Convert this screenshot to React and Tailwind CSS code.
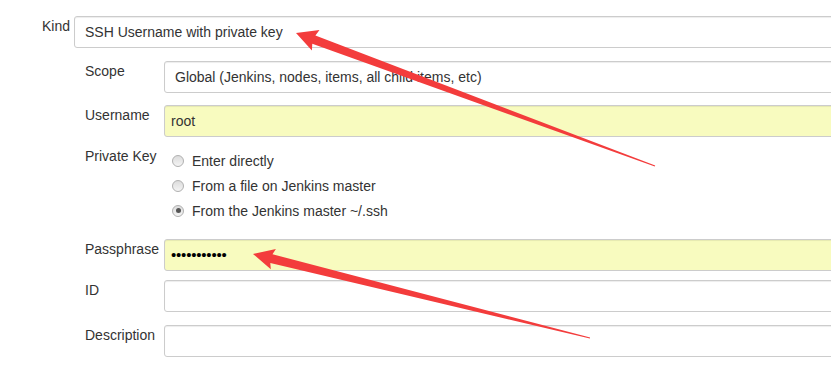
function arrowPoints([tx, ty], [sx, sy], headLen, headHalf, shaftHalf, tailHalf) {
  const dx = sx - tx
  const dy = sy - ty
  const len = Math.hypot(dx, dy)
  const ux = dx / len
  const uy = dy / len
  const px = -uy
  const py = ux
  const bx = tx + ux * headLen
  const by = ty + uy * headLen
  const pts = [
    [tx, ty],
    [bx + px * headHalf, by + py * headHalf],
    [bx + ux * -2 + px * shaftHalf, by + uy * -2 + py * shaftHalf],
    [sx + px * tailHalf, sy + py * tailHalf],
    [sx - px * tailHalf, sy - py * tailHalf],
    [bx + ux * -2 - px * shaftHalf, by + uy * -2 - py * shaftHalf],
    [bx - px * headHalf, by - py * headHalf],
  ]
  return pts.map(([x, y]) => `${x.toFixed(1)},${y.toFixed(1)}`).join(' ')
}

function Field({ children, yellow }) {
  return (
    <div
      className={`h-8 w-[1000px] shrink-0 rounded-[3px] border border-[#cccccc] px-[10px] flex items-center leading-5 shadow-[inset_0_1px_1px_rgba(0,0,0,0.075)] ${
        yellow ? 'bg-[#f8fbbf]' : 'bg-white'
      }`}
    >
      {children}
    </div>
  )
}

function Row({ label, children, className = '' }) {
  return (
    <div className={`flex ${className}`}>
      <div className="w-[79px] shrink-0 leading-5">{label}</div>
      {children}
    </div>
  )
}

function Radio({ checked, label }) {
  return (
    <div className="h-[25px] flex items-center gap-2">
      <span className="w-3 h-3 rounded-full border border-[#b0b0b0] bg-gradient-to-b from-[#dcdcdc] to-[#f4f4f4] flex items-center justify-center">
        {checked && <span className="w-[5px] h-[5px] rounded-full bg-[#555]" />}
      </span>
      <span className="leading-5">{label}</span>
    </div>
  )
}

export default function App() {
  return (
    <div
      className="relative w-[831px] h-[380px] overflow-hidden bg-white text-[14px] text-[#333]"
      style={{ fontFamily: '"Liberation Sans", Arial, sans-serif' }}
    >
      <div className="pt-4 pl-[42px] flex">
        <div className="w-[32px] shrink-0 leading-5">Kind</div>
        <Field>SSH Username with private key</Field>
      </div>

      <div className="pl-[85px]">
        <Row label="Scope" className="mt-[13px]">
          <Field>Global (Jenkins, nodes, items, all child items, etc)</Field>
        </Row>
        <Row label="Username" className="mt-3">
          <Field yellow>
            <span className="-ml-[4px]">root</span>
          </Field>
        </Row>
        <Row label="Private Key" className="mt-[9px]">
          <div className="pl-2 pt-[2px]">
            <Radio label="Enter directly" />
            <Radio label="From a file on Jenkins master" />
            <Radio checked label="From the Jenkins master ~/.ssh" />
          </div>
        </Row>
        <Row label="Passphrase" className="mt-4">
          <Field yellow>
            <span className="-ml-[4px] text-black text-[15px] tracking-[-0.2px]">•••••••••••</span>
          </Field>
        </Row>
        <Row label="ID" className="mt-[9px]">
          <Field />
        </Row>
        <Row label="Description" className="mt-[13px]">
          <Field />
        </Row>
      </div>

      <svg className="absolute inset-0 pointer-events-none" width="831" height="380">
        <polygon points={arrowPoints([296, 33], [655, 166], 21, 11, 4.5, 0.5)} fill="#f33c3c" />
        <polygon points={arrowPoints([253, 254], [590, 338], 21, 10.5, 4.5, 0.5)} fill="#f33c3c" />
      </svg>
    </div>
  )
}
